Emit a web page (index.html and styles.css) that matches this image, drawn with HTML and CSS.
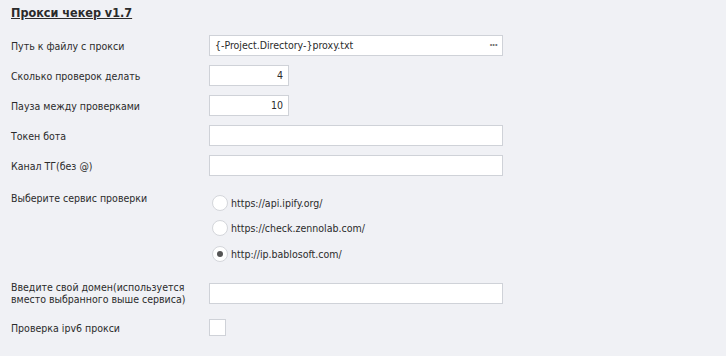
FILE: index.html
```html
<!DOCTYPE html>
<html>
    <head>
        <meta name="viewport" content="width=device-width">
        <title>Прокси чекер</title>
        <link rel="stylesheet" href="styles.css">
    </head>
    <body>
        <div class="title">Прокси чекер v1.7</div>
        <div class="form">
            <div class="row">
                <div class="label">Путь к файлу с прокси</div>
                <div class="field wide file">{-Project.Directory-}proxy.txt<span class="dots">&middot;&middot;&middot;</span></div>
            </div>
            <div class="row">
                <div class="label">Сколько проверок делать</div>
                <div class="field num">4</div>
            </div>
            <div class="row">
                <div class="label">Пауза между проверками</div>
                <div class="field num">10</div>
            </div>
            <div class="row">
                <div class="label">Токен бота</div>
                <div class="field wide"></div>
            </div>
            <div class="row">
                <div class="label">Канал ТГ(без @)</div>
                <div class="field wide"></div>
            </div>
            <div class="row radios-row">
                <div class="label">Выберите сервис проверки</div>
                <div class="radios">
                    <div class="radio"><span class="dot"></span>https://api.ipify.org/</div>
                    <div class="radio"><span class="dot"></span>https://check.zennolab.com/</div>
                    <div class="radio"><span class="dot on"></span>http://ip.bablosoft.com/</div>
                </div>
            </div>
            <div class="row tall">
                <div class="label">Введите свой домен(используется вместо выбранного выше сервиса)</div>
                <div class="field wide"></div>
            </div>
            <div class="row">
                <div class="label">Проверка ipv6 прокси</div>
                <div class="check"></div>
            </div>
        </div>
    </body>
</html>
```
FILE: styles.css
```css
body{
    margin:0;
    background:#f0f1f5;
    color:#2b2b2b;
    font-family:"DejaVu Sans Condensed", "DejaVu Sans", sans-serif;
    font-stretch:condensed;
    font-size:10.5px;
    width:726px;
    height:356px;
    overflow:hidden;
}
.title{
    font-weight:bold;
    font-size:12.5px;
    text-decoration:underline;
    padding:5px 0 0 11px;
    height:35px;
    box-sizing:border-box;
}
.form{padding-left:11px}
.row{display:flex;align-items:center;margin-bottom:9px;min-height:21px}
.label{width:198px;flex:none;line-height:12px}
.field{
    background:white;
    border:1px solid #cfd2d8;
    height:21px;
    box-sizing:border-box;
    line-height:19px;
    padding:0 5px;
}
.wide{width:294px}
.num{width:80px;text-align:right}
.file{display:flex;justify-content:space-between}
.dots{color:#777;font-weight:bold;letter-spacing:-1px}
.radios-row{align-items:flex-start;margin-top:14px}
.radios-row .label{padding-top:2px}
.radios{display:flex;flex-direction:column;padding-left:3px;padding-top:5px}
.radio{display:flex;align-items:center;height:16px;margin-bottom:9px}
.radio:nth-child(2){margin-bottom:10px}
.dot{
    width:14px;height:14px;border:1px solid #d4d6db;border-radius:50%;
    background:white;margin-right:3px;display:flex;align-items:center;justify-content:center;
}
.dot.on::after{content:"";width:6px;height:6px;border-radius:50%;background:#555}
.tall{margin-top:10px;margin-bottom:12px}
.check{width:17px;height:17px;border:1px solid #cfd2d8;background:white;box-sizing:border-box}
```
